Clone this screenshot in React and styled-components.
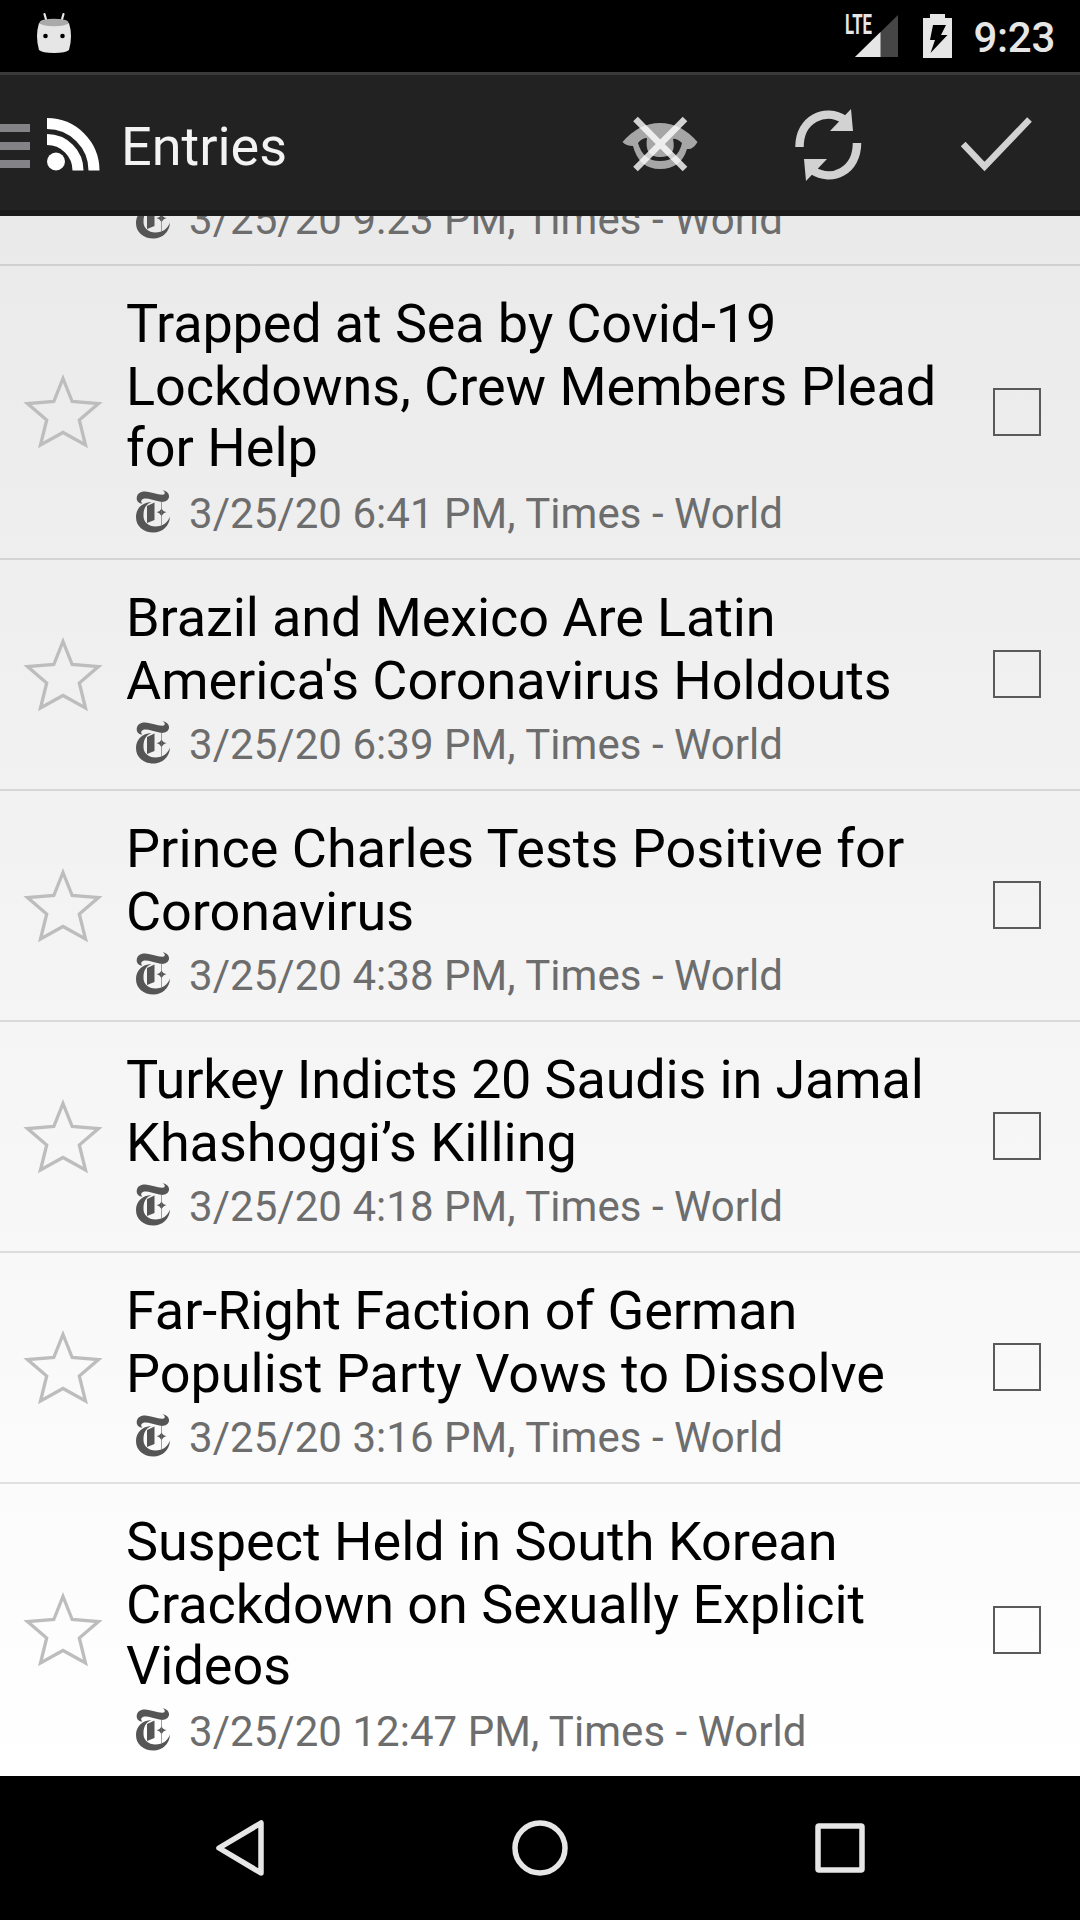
import React from "react";
import styled, { createGlobalStyle } from "styled-components";

const GlobalStyle = createGlobalStyle`
  * { box-sizing: border-box; }
  body { margin: 0; background: #000; }
`;

const Screen = styled.div`
  width: 1080px;
  height: 1920px;
  display: flex;
  flex-direction: column;
  overflow: hidden;
  font-family: Roboto, "Liberation Sans", sans-serif;
  background: #000;
`;

const StatusBar = styled.header`
  flex: none;
  height: 72px;
  padding: 0 25px 0 37px;
  display: flex;
  align-items: flex-start;
  color: #e6e6e6;
  svg { display: block; flex: none; }
`;

const StatusIcons = styled.div`
  margin-left: auto;
  display: flex;
`;

const NetworkLabel = styled.span`
  width: 28px;
  margin-top: 12px;
  font-size: 27px;
  font-weight: 700;
  line-height: 26px;
  transform: scaleX(0.62);
  transform-origin: left;
  white-space: nowrap;
`;

const SignalIcon = styled.svg`
  margin: 15px 25px 0 -18px;
`;

const BatteryIcon = styled.svg`
  margin-top: 14px;
`;

const Clock = styled.span`
  margin-left: 22px;
  font-size: 42px;
  font-weight: 500;
  line-height: 50px;
  letter-spacing: -0.3px;
  padding-top: 13px;
`;

const Toolbar = styled.nav`
  flex: none;
  height: 144px;
  padding-right: 47px;
  display: flex;
  align-items: center;
  background: #222;
  border-top: 3px solid #3a3a3a;
  border-bottom: 6px solid #1b1b1b;
  svg { display: block; flex: none; }
`;

const MenuIcon = styled.span`
  width: 30px;
  height: 44px;
  margin-top: 7px;
  display: flex;
  flex-direction: column;
  justify-content: space-between;
  &::before, &::after, i { content: ""; display: block; height: 8px; background: #838387; }
`;

const FeedIcon = styled.svg`
  margin: 3px 0 0 16px;
`;

const Heading = styled.h1`
  margin: 8px auto 0 21px;
  font-size: 54px;
  font-weight: 400;
  line-height: 64px;
  color: #f3f3f3;
`;

const Actions = styled.div`
  display: flex;
  align-items: center;
  gap: 96px;
  padding-top: 5px;
`;

const List = styled.main`
  flex: none;
  height: 1560px;
  overflow: hidden;
  display: flex;
  flex-direction: column;
  justify-content: flex-end;
  background: linear-gradient(#eaeaea, #fff);
`;

const Row = styled.article`
  flex: none;
  display: grid;
  grid-template-columns: 126px 1fr 126px;
  align-items: center;
  height: ${(p) => p.$lines * 63 + (p.$last ? 103 : 105)}px;
  border-bottom: ${(p) => (p.$last ? 0 : 2)}px solid rgba(0, 0, 0, 0.11);
`;

const StarCell = styled.div`
  padding-left: 23px;
  svg { display: block; }
`;

const Copy = styled.div`
  align-self: start;
  padding-top: 26px;
`;

const Title = styled.h2`
  margin: 0;
  font-size: 54px;
  font-weight: 400;
  color: #000;
  white-space: nowrap;
`;

const TitleLine = styled.span`
  display: block;
  height: ${(p) => (p.$tight ? 61 : 63)}px;
  line-height: 63px;
  letter-spacing: ${(p) => p.$tracking}px;
`;

const Meta = styled.div`
  display: flex;
  align-items: center;
  height: 49px;
  padding-left: 9px;
  margin-top: ${(p) => p.$offset}px;
  font-size: 42px;
  line-height: 49px;
  letter-spacing: 0.04px;
  color: #6d6d6d;
  white-space: nowrap;
  svg { display: block; margin: 0 19px 4px 0; flex: none; }
`;

const Checkbox = styled.span`
  display: block;
  width: 48px;
  height: 48px;
  margin: 0 0 1px 39px;
  border: 2px solid #5a5a5a;
`;

const NavBar = styled.footer`
  flex: none;
  height: 144px;
  display: flex;
  justify-content: center;
  align-items: center;
  gap: 200px;
  svg { display: block; }
`;

// Each title line carries its text and its letter spacing in pixels.
// The first entry is scrolled under the toolbar, so only its meta line shows.
const entries = [
  { lines: [["", 0], ["", 0]], meta: "3/25/20 9:23 PM, Times - World" },
  {
    lines: [["Trapped at Sea by Covid-19", -0.14], ["Lockdowns, Crew Members Plead", -0.04], ["for Help", 0]],
    meta: "3/25/20 6:41 PM, Times - World",
  },
  {
    lines: [["Brazil and Mexico Are Latin", -0.09], ["America's Coronavirus Holdouts", -0.08]],
    meta: "3/25/20 6:39 PM, Times - World",
  },
  {
    lines: [["Prince Charles Tests Positive for", 0.03], ["Coronavirus", -0.05]],
    meta: "3/25/20 4:38 PM, Times - World",
  },
  {
    lines: [["Turkey Indicts 20 Saudis in Jamal", -0.15], ["Khashoggi’s Killing", 0]],
    meta: "3/25/20 4:18 PM, Times - World",
  },
  {
    lines: [["Far-Right Faction of German", -0.09], ["Populist Party Vows to Dissolve", 0]],
    meta: "3/25/20 3:16 PM, Times - World",
  },
  {
    lines: [["Suspect Held in South Korean", 0], ["Crackdown on Sexually Explicit", -0.06], ["Videos", -0.05]],
    meta: "3/25/20 12:47 PM, Times - World",
  },
];

const Robot = () => (
  <svg width="34" height="54" viewBox="37 0 34 54">
    <path d="M44.500 14L47 23M63.500 14L61 23" stroke="#e6e6e6" strokeWidth="2.200" strokeLinecap="round" />
    <path d="M39 23Q54 28 69 23Q73 36 69 50Q66 53 54 53Q42 53 39 50Q35 36 39 23Z" fill="#e6e6e6" />
    <ellipse cx="54" cy="22.500" rx="14.500" ry="3.800" fill="#aaa" />
    <circle cx="45.500" cy="36" r="2.300" fill="#000" />
    <circle cx="62.500" cy="36" r="2.300" fill="#000" />
  </svg>
);

const Star = () => (
  <svg width="80" height="78" viewBox="23 374 80 78">
    <path d="M63 379.500L72.200 402.500L98.500 404.500L79.300 421L85.500 446L63 433.500L40.500 446L46.700 421L27.500 404.500L53.800 402.500Z" fill="none" stroke="#bdbdbd" strokeWidth="3.300" />
  </svg>
);

const TimesLogo = () => (
  <svg width="35" height="43" viewBox="-0.500 0 35 43">
    <path fill="#555" d="M27 0C31 1 34 3.500 33.500 7C33 10.500 29 12.500 25 11.800C18 10.500 11 7.500 7.500 9C5 10 5.500 12.500 7 13.500C3.500 13.500 1 11.500 1.200 8C1.500 3.500 5 1.200 10 1.500C16 2 22 5 27 4.800C30 4.500 30 2 27 0Z" />
    <path fill="#555" d="M16 12C9 15 8 20 8 26C8 32 13 36.500 20 36.500C27 36.500 32 33 34.500 26.500C34 36 27 42.500 18 42.500C8 42.500 0.500 36.500 0.500 27C0.500 18.500 6.500 12.500 16 12Z" />
    <path fill="#555" d="M11.500 16L19 12.500V30L11.500 33Z" />
    <path fill="#555" d="M21 22Q24 22 26 18.500Q28 22 31 22Q28 22.500 26 26Q24 22.500 21 22Z" />
    <path stroke="#777" strokeWidth="0.700" d="M26 12V35" />
  </svg>
);

const Entry = ({ entry, last }) => {
  const count = entry.lines.length;
  return (
    <Row $lines={count} $last={last}>
      <StarCell><Star /></StarCell>
      <Copy>
        <Title>
          {entry.lines.map(([text, tracking], i) => (
            <TitleLine key={i} $tight={count === 3 && i === 1} $tracking={tracking}>{text}</TitleLine>
          ))}
        </Title>
        <Meta $offset={count === 3 ? 10 : 8}><TimesLogo />{entry.meta}</Meta>
      </Copy>
      <Checkbox />
    </Row>
  );
};

export default function App() {
  return (
    <Screen>
      <GlobalStyle />
      <StatusBar>
        <Robot />
        <StatusIcons>
          <NetworkLabel>LTE</NetworkLabel>
          <SignalIcon width="43" height="42" viewBox="0 0 43 42">
            <path d="M43 0V42H0Z" fill="#464646" />
            <path d="M25.500 17V42H0Z" fill="#e6e6e6" />
          </SignalIcon>
          <BatteryIcon width="29" height="44" viewBox="0 0 29 44">
            <path d="M7 0H22V4H29V44H0V4H7Z" fill="#e6e6e6" />
            <path d="M10 11H23L18 21H24.500L7.500 39L12 26H7Z" fill="#000" />
          </BatteryIcon>
        </StatusIcons>
        <Clock>9:23</Clock>
      </StatusBar>
      <Toolbar>
        <MenuIcon><i /></MenuIcon>
        <FeedIcon width="54" height="54" viewBox="0 0 54 54">
          <circle cx="10" cy="44.500" r="9" fill="#fff" />
          <path d="M1 22.500A31 31 0 0 1 32 53.500M1 6.500A47 47 0 0 1 48 53.500" fill="none" stroke="#fff" strokeWidth="11" />
        </FeedIcon>
        <Heading>Entries</Heading>
        <Actions>
          <svg width="76" height="76" viewBox="622 107 76 76">
            <path fill="#a6a6a6" fillRule="evenodd" d="M622.500 142Q639 123 660 123Q681 123 697.500 142Q693 150 687 149Q681 169 660 169Q639 169 633 146Q626 146 622.500 142ZM638 143Q643 161 660 161Q678 161 682 143Q676 138 673 139Q677 157 660 157Q644 157 647 138Q642 138 638 143Z" />
            <path d="M635.500 119L685 169M685 119L635.500 169" stroke="#fff" strokeOpacity="0.800" strokeWidth="6.500" />
          </svg>
          <svg width="71" height="74" viewBox="794 108 71 74">
            <path d="M799.500 147C799.500 119 825 107 845 120M857 143C857 171 832 183 812 170" fill="none" stroke="#d2d2d2" strokeWidth="8.500" />
            <path d="M851 109L853 131H830ZM804 159H827L806 181Z" fill="#d2d2d2" />
          </svg>
          <svg width="72" height="56" viewBox="961 117 72 56">
            <path d="M963.200 144L984.500 166.500L1029.500 119.500" fill="none" stroke="#d2d2d2" strokeWidth="6.500" />
          </svg>
        </Actions>
      </Toolbar>
      <List>
        {entries.map((entry, i) => (
          <Entry key={entry.meta} entry={entry} last={i === entries.length - 1} />
        ))}
      </List>
      <NavBar>
        <svg width="100" height="80" viewBox="190 1808 100 80">
          <path d="M261 1823V1873L219 1848Z" fill="none" stroke="#e6e6e6" strokeWidth="5.500" strokeLinejoin="round" />
        </svg>
        <svg width="100" height="80" viewBox="490 1808 100 80">
          <circle cx="540" cy="1848" r="25" fill="none" stroke="#e6e6e6" strokeWidth="5.500" />
        </svg>
        <svg width="100" height="80" viewBox="790 1808 100 80">
          <rect x="818" y="1826" width="44" height="44" rx="1" fill="none" stroke="#e6e6e6" strokeWidth="5.500" />
        </svg>
      </NavBar>
    </Screen>
  );
}
